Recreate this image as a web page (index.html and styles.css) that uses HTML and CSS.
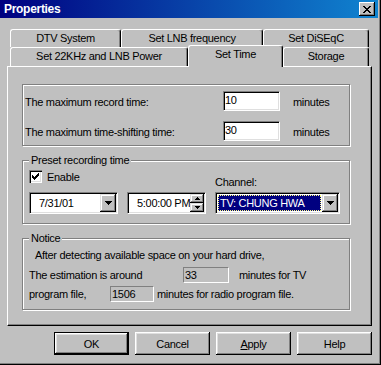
FILE: index.html
```html
<!DOCTYPE html>
<html lang="en">
<head>
    <meta charset="UTF-8">
    <meta name="viewport" content="width=device-width, initial-scale=1.0">
    <title>Properties</title>
    <link rel="stylesheet" href="styles.css">
</head>
<body>
    <div class="window">
        <div class="titlebar">
            <span class="title">Properties</span>
            <span class="close">
                <svg width="8" height="7" viewBox="0 0 8 7" shape-rendering="crispEdges">
                    <path d="M0 0h2v1h-2zM6 0h2v1h-2zM1 1h2v1h-2zM5 1h2v1h-2zM2 2h4v1h-4zM3 3h2v1h-2zM2 4h4v1h-4zM1 5h2v1h-2zM5 5h2v1h-2zM0 6h2v1h-2zM6 6h2v1h-2z" fill="#000"/>
                </svg>
            </span>
        </div>

        <div class="content">
            <div class="tab-row">
                <div class="tab w-dtv">DTV System</div>
                <div class="tab w-lnb">Set LNB frequency</div>
                <div class="tab w-diseqc">Set DiSEqC</div>
            </div>
            <div class="tab-row front">
                <div class="tab w-power">Set 22KHz and LNB Power</div>
                <div class="tab active w-time">Set Time</div>
                <div class="tab w-storage">Storage</div>
            </div>

            <div class="panel">
                <div class="group limits">
                    <span class="label">The maximum record time:</span>
                    <span class="edit">10</span>
                    <span class="label">minutes</span>
                    <span class="label">The maximum time-shifting time:</span>
                    <span class="edit">30</span>
                    <span class="label">minutes</span>
                </div>

                <div class="group preset">
                    <div class="group-title">Preset recording time</div>
                    <div class="preset-grid">
                        <div class="check">
                            <span class="checkbox">
                                <svg width="7" height="7" viewBox="0 0 7 7" shape-rendering="crispEdges">
                                    <path d="M6 0h1v3h-1zM5 1h1v3h-1zM4 2h1v3h-1zM3 3h1v3h-1zM2 4h1v3h-1zM1 3h1v3h-1zM0 2h1v3h-1z" fill="#000"/>
                                </svg>
                            </span>
                            <span>Enable</span>
                        </div>
                        <div class="channel-label">Channel:</div>
                        <div class="combo date">
                            <span class="combo-text">7/31/01</span>
                            <span class="drop"><svg width="7" height="4" viewBox="0 0 7 4" shape-rendering="crispEdges"><path d="M0 0h7v1h-7zM1 1h5v1h-5zM2 2h3v1h-3zM3 3h1v1h-1z" fill="#000"/></svg></span>
                        </div>
                        <div class="combo time">
                            <span class="combo-text">5:00:00 PM</span>
                            <span class="spin">
                                <span class="spin-btn"><svg width="5" height="3" viewBox="0 0 5 3" shape-rendering="crispEdges"><path d="M2 0h1v1h-1zM1 1h3v1h-3zM0 2h5v1h-5z" fill="#000"/></svg></span>
                                <span class="spin-btn"><svg width="5" height="3" viewBox="0 0 5 3" shape-rendering="crispEdges"><path d="M0 0h5v1h-5zM1 1h3v1h-3zM2 2h1v1h-1z" fill="#000"/></svg></span>
                            </span>
                        </div>
                        <div class="combo channel">
                            <span class="selected">TV: CHUNG HWA</span>
                            <span class="drop"><svg width="7" height="4" viewBox="0 0 7 4" shape-rendering="crispEdges"><path d="M0 0h7v1h-7zM1 1h5v1h-5zM2 2h3v1h-3zM3 3h1v1h-1z" fill="#000"/></svg></span>
                        </div>
                    </div>
                </div>

                <div class="group notice">
                    <div class="group-title">Notice</div>
                    <div class="notice-line first">After detecting available space on your hard drive,</div>
                    <div class="notice-line">
                        <span class="lbl-est">The estimation is around</span>
                        <span class="readout w-tv">33</span>
                        <span>minutes for TV</span>
                    </div>
                    <div class="notice-line">
                        <span class="lbl-prog">program file,</span>
                        <span class="readout w-radio">1506</span>
                        <span>minutes for radio program file.</span>
                    </div>
                </div>
            </div>

            <div class="buttons">
                <div class="btn default">OK</div>
                <div class="btn">Cancel</div>
                <div class="btn"><span><u>A</u>pply</span></div>
                <div class="btn">Help</div>
            </div>
        </div>
    </div>
</body>
</html>
```

FILE: styles.css
```css
* {
    box-sizing: border-box;
}

body {
    margin: 0;
    font-family: "Liberation Sans", Arial, sans-serif;
    font-size: 11px;
    letter-spacing: -0.3px;
    color: #000;
    background: #c0c0c0;
}

.window {
    width: 381px;
    height: 365px;
    display: flex;
    flex-direction: column;
    background: #c0c0c0;
    box-shadow: inset -1px -1px #000, inset -2px -2px #808080;
    overflow: hidden;
}

/* title bar */

.titlebar {
    width: 378px;
    height: 18px;
    display: flex;
    align-items: center;
    justify-content: space-between;
    padding: 0 3px 0 4px;
    background: linear-gradient(to right, #000080, #1084d0);
}

.title {
    color: #fff;
    font-weight: bold;
    font-size: 12px;
}

.close {
    width: 16px;
    height: 14px;
    display: flex;
    align-items: center;
    justify-content: center;
    background: #c0c0c0;
    box-shadow: inset -1px -1px #000, inset 1px 1px #fff, inset -2px -2px #808080;
}

.content {
    padding: 11px 9px 0 7px;
}

/* tabs */

.tab-row {
    display: flex;
    height: 18px;
    padding-left: 3px;
}

.tab-row.front {
    height: 19px;
    align-items: flex-end;
}

.tab {
    height: 100%;
    border-top: 1px solid #fff;
    border-left: 1px solid #fff;
    border-right: 1px solid #000;
    border-radius: 3px 3px 0 0;
    box-shadow: inset -1px 0 #808080;
    text-align: center;
    line-height: 17px;
    white-space: nowrap;
}

.tab.active {
    position: relative;
    z-index: 1;
    height: 22px;
    margin-bottom: -1px;
    background: #c0c0c0;
}

.w-dtv { width: 111px; }
.w-lnb { width: 142px; }
.w-diseqc { width: 106px; }
.w-power { width: 178px; }
.w-time { width: 95px; }
.w-storage { width: 86px; }

/* panel and groups */

.panel {
    width: 365px;
    height: 260px;
    border-top: 1px solid #fff;
    border-left: 1px solid #fff;
    border-right: 1px solid #000;
    border-bottom: 1px solid #000;
    box-shadow: inset -1px -1px #808080;
    padding: 17px 0 0 14px;
}

.group {
    width: 328px;
    border: 1px solid #808080;
    box-shadow: 1px 1px #fff, inset 1px 1px #fff;
}

.group + .group {
    margin-top: 14px;
}

.group-title {
    width: max-content;
    margin-top: -8px;
    padding: 0 2px;
    line-height: 14px;
    background: #c0c0c0;
}

.limits {
    height: 62px;
    padding: 6px 0 0 2px;
    display: grid;
    grid-template-columns: 185px 57px auto;
    grid-auto-rows: 20px;
    column-gap: 13px;
    row-gap: 10px;
    align-items: center;
}

.label {
    padding-top: 1px;
}

.edit {
    height: 20px;
    padding-left: 1px;
    line-height: 16px;
    background: #fff;
    border-top: 1px solid #808080;
    border-left: 1px solid #808080;
    border-bottom: 1px solid #fff;
    border-right: 1px solid #fff;
    box-shadow: inset 1px 1px #000, inset -1px -1px #dfdfdf;
}

.preset {
    height: 64px;
    padding-left: 6px;
}

.preset-grid {
    margin-top: 3px;
    display: grid;
    grid-template-columns: 89px 79px 125px;
    grid-template-rows: 22px 22px;
    column-gap: 9px;
}

.check {
    grid-column: 1 / 3;
    display: flex;
    align-items: center;
    gap: 5px;
    height: 13px;
}

.checkbox {
    width: 13px;
    height: 13px;
    display: flex;
    align-items: center;
    justify-content: center;
    background: #fff;
    box-shadow: inset 1px 1px #808080, inset 2px 2px #000, inset -1px -1px #fff, inset -2px -2px #dfdfdf;
}

.channel-label {
    grid-column: 3;
    grid-row: 1;
    align-self: end;
    margin-bottom: 3px;
    line-height: 14px;
}

.combo {
    height: 22px;
    display: flex;
    padding: 1px;
    background: #fff;
    border-top: 1px solid #808080;
    border-left: 1px solid #808080;
    border-bottom: 1px solid #fff;
    border-right: 1px solid #fff;
    box-shadow: inset 1px 1px #000, inset -1px -1px #dfdfdf;
}

.combo-text {
    flex: 1;
    line-height: 18px;
    white-space: nowrap;
    overflow: hidden;
}

.date .combo-text {
    padding-left: 8px;
}

.time {
    width: 79px;
}

.time .combo-text {
    padding-left: 8px;
}

.drop {
    width: 16px;
    display: flex;
    align-items: center;
    justify-content: center;
    background: #c0c0c0;
    box-shadow: inset -1px -1px #000, inset 1px 1px #dfdfdf, inset -2px -2px #808080, inset 2px 2px #fff;
}

.spin {
    width: 14px;
    display: flex;
    flex-direction: column;
}

.spin-btn {
    flex: 1;
    display: flex;
    align-items: center;
    justify-content: center;
    background: #c0c0c0;
    box-shadow: inset -1px -1px #000, inset 1px 1px #dfdfdf, inset -2px -2px #808080, inset 2px 2px #fff;
}

.selected {
    flex: 1;
    margin: 1px;
    padding-left: 1px;
    line-height: 14px;
    color: #fff;
    background: #000080;
    border: 1px dotted #ffff80;
    white-space: nowrap;
}

/* notice */

.notice {
    height: 72px;
    padding-left: 6px;
}

.notice-line {
    display: flex;
    align-items: center;
    height: 19px;
    white-space: nowrap;
}

.notice-line.first {
    height: 21px;
    margin-top: -1px;
    padding-left: 6px;
}

.lbl-est { width: 154px; }
.lbl-prog { width: 81px; }

.readout {
    height: 16px;
    padding-left: 1px;
    line-height: 14px;
    border-top: 1px solid #808080;
    border-left: 1px solid #808080;
    border-bottom: 1px solid #fff;
    border-right: 1px solid #fff;
}

.w-tv {
    width: 46px;
    margin-right: 10px;
}

.w-radio {
    width: 44px;
    margin-right: 3px;
}

/* bottom buttons */

.buttons {
    display: flex;
    justify-content: flex-end;
    gap: 6px;
    margin-top: 6px;
}

.btn {
    width: 75px;
    height: 23px;
    display: flex;
    align-items: center;
    justify-content: center;
    background: #c0c0c0;
    box-shadow: inset -1px -1px #000, inset 1px 1px #fff, inset -2px -2px #808080, inset 2px 2px #dfdfdf;
}

.btn.default {
    border: 1px solid #000;
}
```
